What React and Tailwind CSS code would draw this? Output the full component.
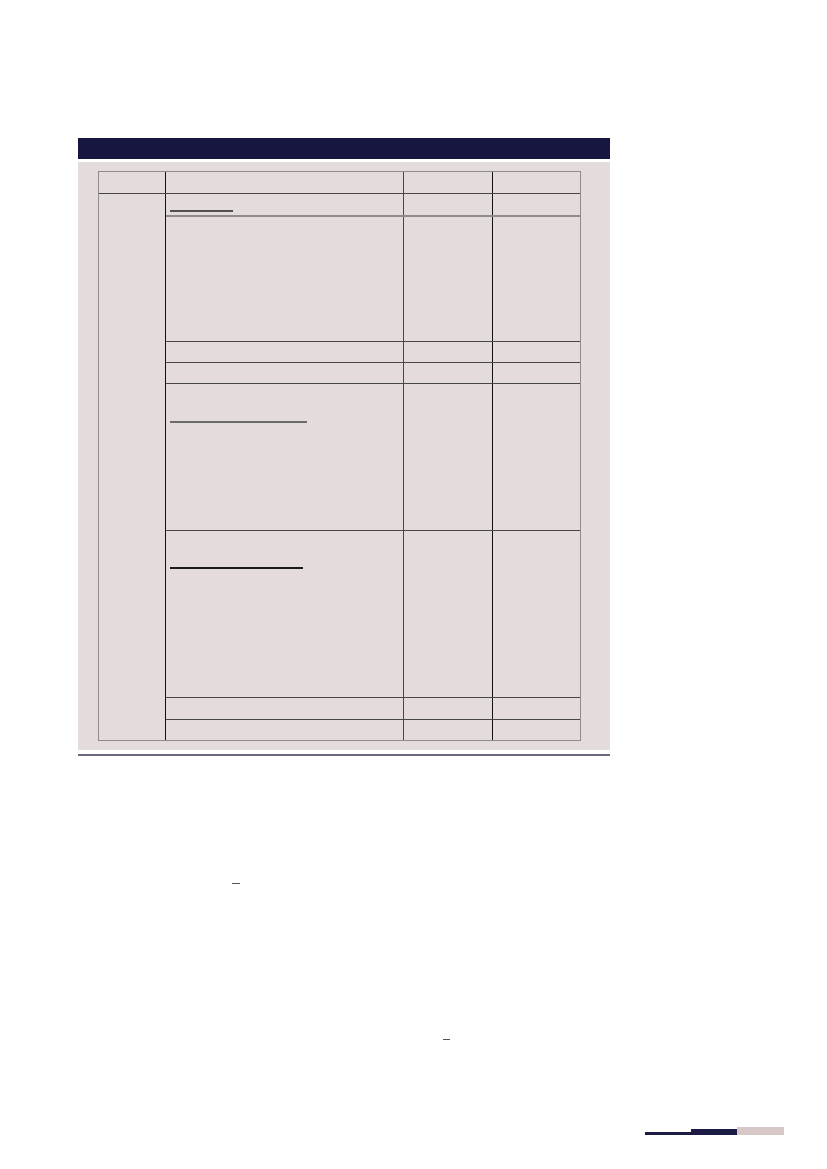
import React from "react";

function Row({ h, border = "border-[#474747]", bw = "border-b", children, last = false }) {
  return (
    <div className={`flex ${last ? "" : `${bw} ${border}`}`}>
      <div className={`w-[238px] shrink-0 ${h} border-r border-[#474747] relative`}>{children}</div>
      <div className={`w-[89px] shrink-0 ${h} border-r border-[#111111]`}></div>
      <div className={`w-[87px] shrink-0 ${h}`}></div>
    </div>
  );
}

export default function App() {
  return (
    <div className="w-[827px] h-[1169px] bg-white overflow-hidden" style={{ fontFamily: '"Liberation Sans", Arial, sans-serif' }}>
      <div className="pt-[138px] pl-[78px]">
        <div className="w-[532px]">
          <div className="h-[21px] bg-[#161640]"></div>
          <div className="mt-[3px] bg-[#e3dcdb] pt-[9px] pb-[9px] pl-[20px]">
            <div className="w-[483px] border border-[#8e8b8b]">
              {/* header row */}
              <div className="flex h-[22px] border-b border-[#474747]">
                <div className="w-[67px] shrink-0 border-r border-[#111111]"></div>
                <div className="w-[238px] shrink-0 border-r border-[#474747]"></div>
                <div className="w-[89px] shrink-0 border-r border-[#111111]"></div>
                <div className="w-[87px] shrink-0"></div>
              </div>
              <div className="flex">
                <div className="w-[67px] shrink-0 border-r border-[#111111]"></div>
                <div className="flex flex-col">
                  <Row h="h-[21px]" border="border-[#8e8b8b]" bw="border-b-2">
                    <div className="ml-[4px] mt-[16px] w-[63px] h-[2px] bg-[#505050]"></div>
                  </Row>
                  <Row h="h-[124px]" />
                  <Row h="h-[20px]" />
                  <Row h="h-[20px]" />
                  <Row h="h-[146px]">
                    <div className="ml-[4px] mt-[37px] w-[137px] h-[2px] bg-[#6a6a6a]"></div>
                  </Row>
                  <Row h="h-[166px]">
                    <div className="ml-[4px] mt-[36px] w-[133px] h-[2px] bg-[#1a1a1a]"></div>
                  </Row>
                  <Row h="h-[21px]" />
                  <Row h="h-[20px]" last />
                </div>
              </div>
            </div>
          </div>
          <div className="mt-[4px] h-[2px] bg-[#68687f]"></div>
        </div>
      </div>
      <div className="mt-[127px] ml-[232px] w-[8px] h-[1px] bg-[#555555]"></div>
      <div className="mt-[155px] ml-[443px] w-[7px] h-[1px] bg-[#555555]"></div>
      <div className="mt-[87px] ml-[645px] flex items-end">
        <div className="w-[46px] h-[3px] bg-[#1b1b44]"></div>
        <div className="w-[46px] h-[6px] bg-[#1b1b44]"></div>
        <div className="w-[47px] h-[8px] bg-[#d7c7c7]"></div>
      </div>
    </div>
  );
}
